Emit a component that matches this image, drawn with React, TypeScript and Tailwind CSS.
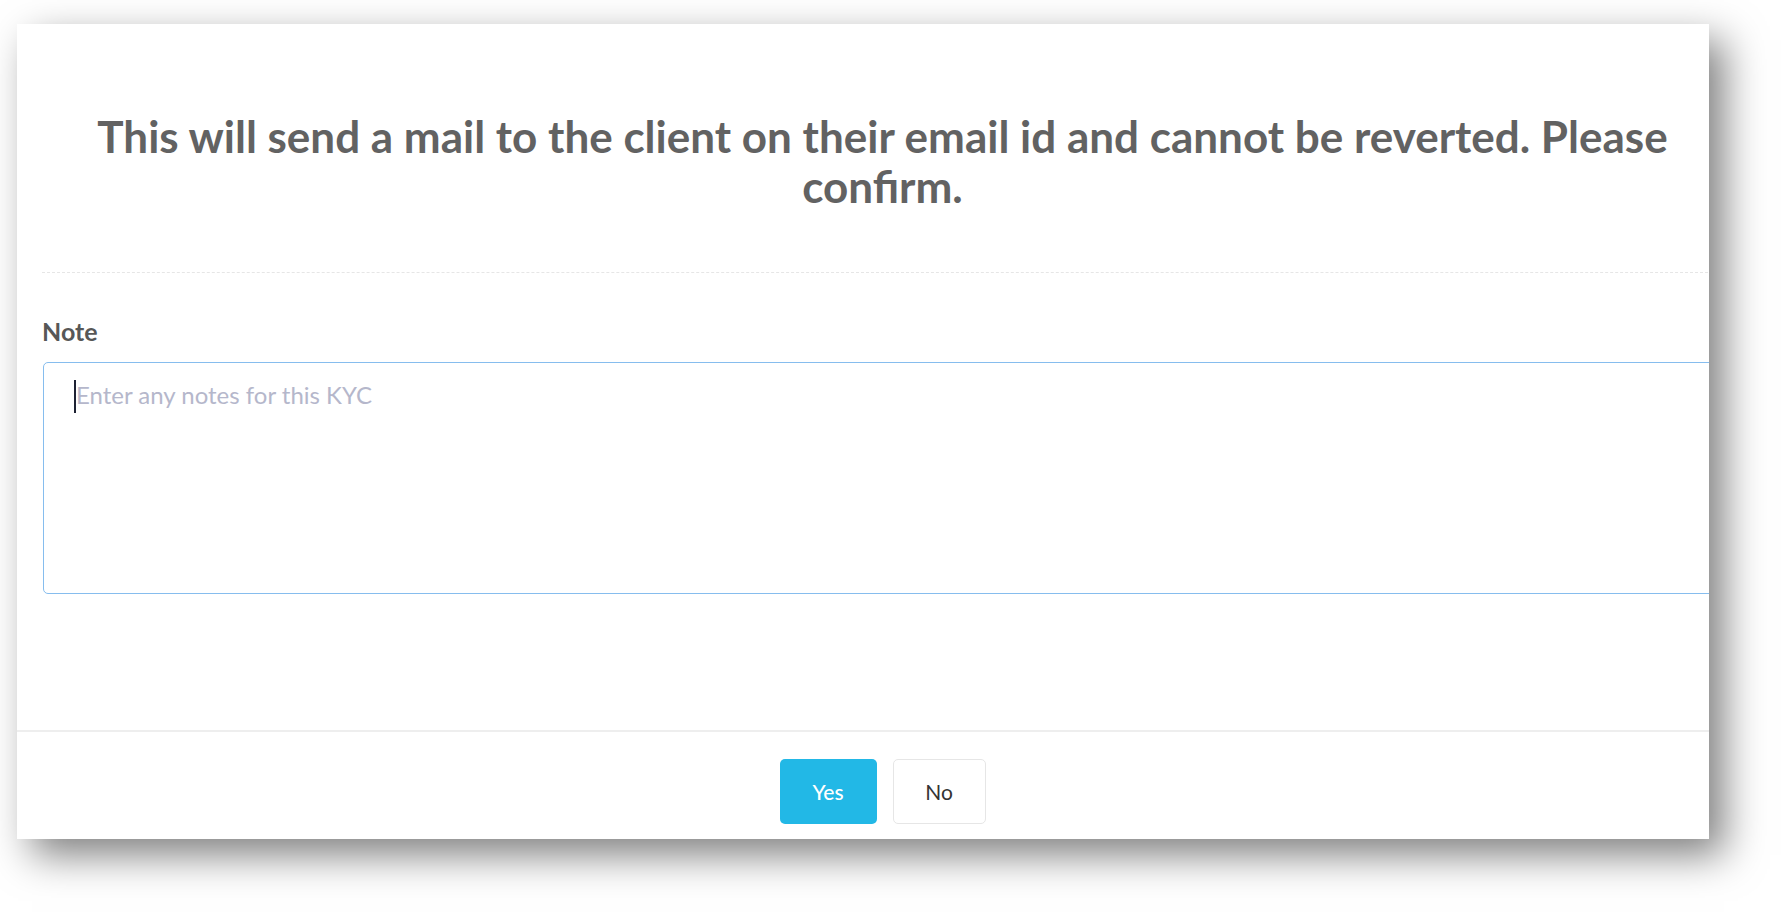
export default function App() {
  return (
    <div className="min-h-[912px] bg-white pl-[17px] pt-[24px] font-['Lato','Liberation_Sans',sans-serif]">
      {/* Modal panel (content is wider than the visible panel and gets clipped) */}
      <div className="relative w-[1692px] h-[815px] overflow-hidden bg-white shadow-[15px_16px_38px_rgba(0,0,0,0.5)]">
        <div className="w-[1731px] flex flex-col h-full">
          {/* Header */}
          <div className="pt-[87px] pb-[61px] px-[50px]">
            <h3 className="text-center text-[44px] leading-[50px] font-bold text-[#626262]">
              This will send a mail to the client on their email id and cannot be reverted. Please confirm.
            </h3>
          </div>

          {/* Body */}
          <div className="px-[25px]">
            <div className="border-t border-dashed border-[#e6e6e6]" />
            <label className="block mt-[44px] text-[25px] leading-[29px] font-bold text-[#575757]">
              Note
            </label>
            <div className="relative mt-[16px] ml-px">
              <textarea
                placeholder="Enter any notes for this KYC"
                className="block w-full h-[232px] resize-none rounded-[5px] border border-[#86bdee] bg-white pl-[32px] pt-[15px] text-[24px] leading-[34px] text-[#333] placeholder:text-[#b5b7cb] outline-none"
              />
              <span className="absolute left-[31px] top-[18px] w-[2px] h-[33px] bg-[#1e2233]" />
            </div>
          </div>

          {/* Footer */}
          <div className="mt-auto border-t-2 border-[#eeeeee] pt-[27px] pb-[15px] flex justify-center gap-[16px]">
            <button className="w-[97px] h-[65px] rounded-[5px] bg-[#22b8e6] text-white text-[21px] font-medium">
              Yes
            </button>
            <button className="w-[93px] h-[65px] rounded-[5px] border border-[#e6e6e6] bg-white text-[#333] text-[21px]">
              No
            </button>
          </div>
        </div>
      </div>
    </div>
  );
}
